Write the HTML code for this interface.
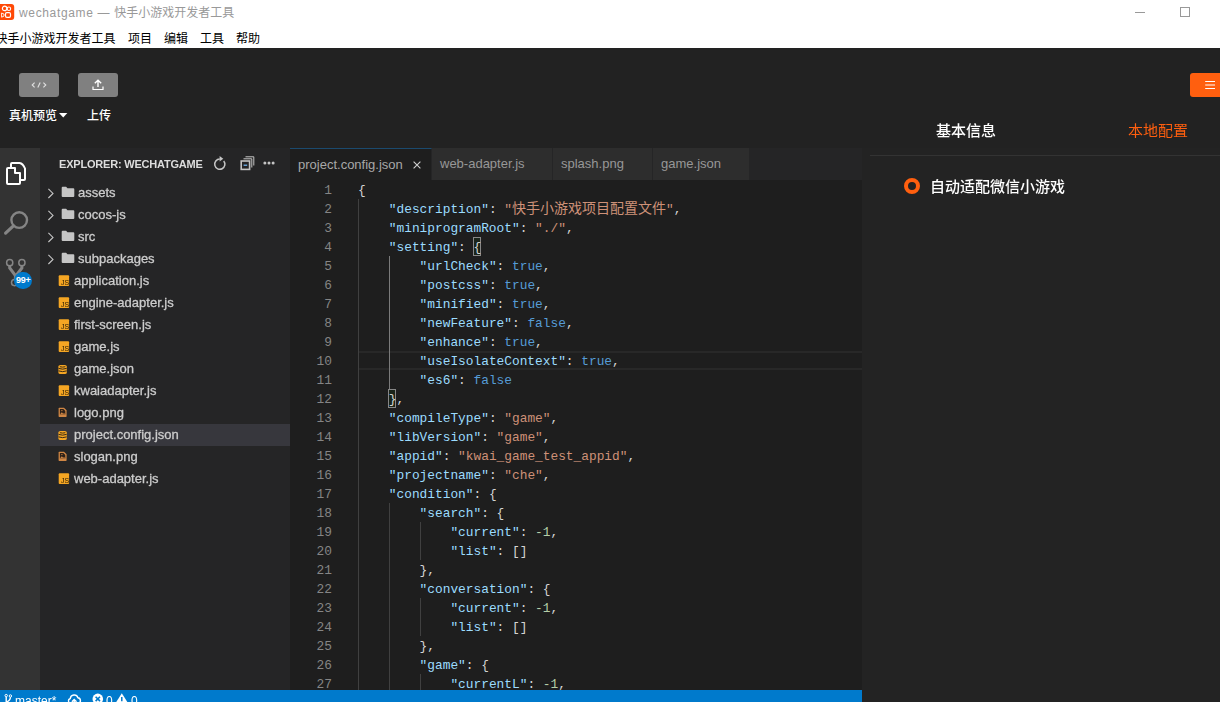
<!DOCTYPE html>
<html lang="zh-CN">
<head>
<meta charset="utf-8">
<title>wechatgame — 快手小游戏开发者工具</title>
<style>
*{box-sizing:border-box;margin:0;padding:0}
html,body{width:1220px;height:702px;overflow:hidden;background:#222222}
body{position:relative;font-family:"Liberation Sans","Noto Sans CJK SC",sans-serif;font-size:13px;color:#ccc}
.abs{position:absolute}
#titlebar{position:absolute;left:0;top:0;width:1220px;height:48px;background:#fff}
#title{position:absolute;left:19px;top:5px;font-size:12px;line-height:16px;color:#999;white-space:nowrap}
#title .lat{letter-spacing:0.65px}
#menu{position:absolute;left:-3px;top:31px;font-size:12px;line-height:16px;color:#000;white-space:nowrap}
#menu span{position:absolute;top:0}
#toolbar{position:absolute;left:0;top:48px;width:1220px;height:100px;background:#222222}
.tbtn{position:absolute;top:25px;width:40px;height:24px;border-radius:3px;background:#808080}
.tlabel{position:absolute;top:60px;font-size:12px;line-height:16px;color:#fff;white-space:nowrap;font-weight:500}
#activity{position:absolute;left:0;top:148px;width:40px;height:542px;background:#333333}
#badge{position:absolute;left:14.4px;top:123.6px;width:17.6px;height:17.6px;border-radius:50%;background:#007acc;color:#fff;font-size:9px;font-weight:bold;line-height:17.6px;text-align:center;letter-spacing:-0.3px}
#sidebar{position:absolute;left:40px;top:148px;width:250px;height:542px;background:#252526}
#sbtitle{position:absolute;left:19px;top:9px;font-size:11px;line-height:14px;color:#ddd;font-weight:bold;white-space:nowrap;letter-spacing:-0.2px}
.row{position:absolute;left:0;width:250px;height:22px;line-height:22px;font-size:13px;color:#cccccc;white-space:nowrap;-webkit-text-stroke:0.3px #cccccc}
.row.sel{background:#37373d}
.row .lbl{position:absolute;top:0}
.row svg{position:absolute}
#tabs{position:absolute;left:290px;top:148px;width:572px;height:32px;background:#252526}
.tab{position:absolute;top:0;height:32px;background:#2d2d2d;color:#979797;font-size:13px;line-height:31px;padding-left:8px;white-space:nowrap;border-right:1px solid #252526}
.tab.active{background:#1e1e1e;color:#a8a8a8;border-top:1px solid #1b4a6e;line-height:32px;padding-left:8px}
#editor{position:absolute;left:290px;top:180px;width:572px;height:510px;background:#1e1e1e;overflow:hidden}
.ln{position:absolute;margin-top:1px;left:0;width:42px;text-align:right;height:19px;line-height:19px;color:#858585;font-family:"Liberation Mono","DejaVu Sans Mono",monospace;font-size:12.83px}
.cl{position:absolute;margin-top:1px;left:68px;height:19px;line-height:19px;white-space:pre;color:#d4d4d4;font-family:"Liberation Mono","Noto Sans CJK SC",monospace;font-size:12.83px}
.k{color:#9cdcfe}.s{color:#ce9178}.b{color:#569cd6}.n{color:#b5cea8}
.cj{line-height:0;font-size:14px;font-family:"Noto Sans CJK SC",sans-serif}
.bm{position:absolute;width:8px;height:19px;border:1px solid #888;background:rgba(0,100,0,0.1)}
.guide{position:absolute;width:1px;background:#404040}
.guide.act{background:#7a7a7a}
.curline{position:absolute;left:68px;width:504px;height:19px;border-top:2px solid #282828;border-bottom:2px solid #282828}
#status{position:absolute;left:0;top:690px;width:862px;height:22px;background:#007acc;color:#fff;font-size:12px;line-height:22px;white-space:nowrap}
#status span{position:absolute;top:0}
#status svg{position:absolute}
#right{position:absolute;left:862px;top:148px;width:358px;height:554px;background:#232323}
.rtab{position:absolute;top:-27px;font-size:15px;line-height:20px;white-space:nowrap}
#sbin{position:absolute;left:0;top:0;width:250px;height:542px;will-change:transform}
.gl{position:absolute;left:0;top:0;will-change:transform}

</style>
</head>
<body>
<div id="titlebar">
  <svg class="abs" style="left:0;top:4px" width="15" height="16" viewBox="0 0 15 16"><path d="M-4 0H11.2A3 3 0 0 1 14.2 3V13A3 3 0 0 1 11.2 16H-4Z" fill="#ff4906"/><circle cx="4.6" cy="4.4" r="2.2" fill="none" stroke="#fff" stroke-width="1.2"/><circle cx="8.9" cy="4.7" r="1.75" fill="none" stroke="#fff" stroke-width="1.1"/><rect x="5.5" y="8.6" width="5" height="4.8" rx="1.4" fill="none" stroke="#fff" stroke-width="1.2"/><path d="M1.6 9L4 10.1V12.1L1.6 13.2Z" fill="none" stroke="#fff" stroke-width="0.9" stroke-linejoin="round"/></svg>
  <div id="title"><span class="lat">wechatgame — </span>快手小游戏开发者工具</div>
  <svg class="abs" style="left:1130px;top:0" width="70" height="24" viewBox="0 0 70 24"><path d="M5 12.5H15" stroke="#999" stroke-width="1"/><rect x="50.5" y="7.5" width="9" height="9" fill="none" stroke="#999" stroke-width="1"/></svg>
  <div id="menu"><span style="left:-1.5px">快手小游戏开发者工具</span><span style="left:131px">项目</span><span style="left:167px">编辑</span><span style="left:203px">工具</span><span style="left:239px">帮助</span></div>
</div>

<div id="toolbar">
  <div class="tbtn" style="left:19px"><svg class="abs" style="left:12px;top:8px" width="16" height="8" viewBox="0 0 16 8"><path d="M3.6 1.6L1.2 4L3.6 6.4M12.4 1.6L14.8 4L12.4 6.4M9.2 1.4L6.8 6.6" fill="none" stroke="#e0e0e0" stroke-width="1.1"/></svg></div>
  <div class="tbtn" style="left:78px"><svg class="abs" style="left:14px;top:6px" width="12" height="12" viewBox="0 0 12 12"><path d="M6 1.2V8M2.8 4.2L6 1.2L9.2 4.2" fill="none" stroke="#fff" stroke-width="1.4"/><path d="M1 7.5V10.5H11V7.5" fill="none" stroke="#fff" stroke-width="1.2"/></svg></div>
  <div class="tlabel" style="left:9px">真机预览</div>
  <svg class="abs" style="left:59px;top:65px" width="9" height="5" viewBox="0 0 9 5"><path d="M0 0H8.4L4.2 4.4Z" fill="#fff"/></svg>
  <div class="tlabel" style="left:87px">上传</div>
  <div class="abs" style="left:1190px;top:25px;width:34px;height:24px;border-radius:3px;background:#ff5f0f"></div>
  <svg class="abs" style="left:1200px;top:28px" width="20" height="18" viewBox="1200 76 20 18"><path d="M1205.2 81.5H1215M1205.2 88.5H1215" stroke="#fff" stroke-width="1.1"/><path d="M1205.2 85H1215" stroke="#ffc3a4" stroke-width="1.6"/></svg>
</div>

<div id="activity">
  <svg class="abs" style="left:0;top:0" width="40" height="50" viewBox="0 148 40 50"><path d="M11 167V164Q11 163 12 163H19.5Q23 163.5 25 168.5V179Q25 180 24 180H21" fill="none" stroke="#fff" stroke-width="2"/><path d="M8 168H15V173H20V183Q20 184 19 184H8Q7 184 7 183V169Q7 168 8 168Z" fill="none" stroke="#fff" stroke-width="2" stroke-linejoin="round"/></svg>
  <svg class="abs" style="left:0;top:50px" width="40" height="100" viewBox="0 198 40 100"><circle cx="19.2" cy="220.1" r="7.8" fill="none" stroke="#858585" stroke-width="2.4"/><path d="M13.4 225.8L5.6 233.1" stroke="#858585" stroke-width="3.2" stroke-linecap="round"/><circle cx="9.7" cy="262.7" r="3.1" fill="none" stroke="#858585" stroke-width="1.5"/><circle cx="21.9" cy="262.7" r="3.1" fill="none" stroke="#858585" stroke-width="1.5"/><circle cx="14.6" cy="282.6" r="3.1" fill="none" stroke="#858585" stroke-width="1.5"/><path d="M9.7 266V268L15.4 275.5V279.5M21.9 266V268L16.2 275.5" fill="none" stroke="#858585" stroke-width="3"/></svg>
  <div id="badge">99+</div>
</div>

<div id="sidebar"><div id="sbin">
  <div id="sbtitle">EXPLORER: WECHATGAME</div>
  <svg class="abs" style="left:173px;top:7px" width="14" height="16" viewBox="0 0 14 16"><path d="M10.7 5.9A5.1 5.1 0 1 1 6.8 4.1" fill="none" stroke="#c5c5c5" stroke-width="1.5"/><path d="M6.6 1L10.3 3.7L6.6 6.4Z" fill="#c5c5c5"/></svg>
  <svg class="abs" style="left:200px;top:8px" width="15" height="15" viewBox="0 0 15 15"><path d="M5.5 0.8H13.8V9.5M3.5 2.8H11.8V11.5" fill="none" stroke="#c5c5c5" stroke-width="1"/><rect x="1.2" y="5" width="8.4" height="8.4" fill="none" stroke="#c5c5c5" stroke-width="1.6"/><rect x="3.6" y="8.6" width="3.6" height="1.2" fill="#75beff"/></svg>
  <svg class="abs" style="left:223px;top:13px" width="12" height="4" viewBox="0 0 12 4"><circle cx="1.9" cy="1.9" r="1.5" fill="#c5c5c5"/><circle cx="6" cy="1.9" r="1.5" fill="#c5c5c5"/><circle cx="10.1" cy="1.9" r="1.5" fill="#c5c5c5"/></svg>
<div class="row" style="top:34px"><svg style="left:0;top:0" width="40" height="22" viewBox="0 0 40 22"><path d="M8.4 6.9L13 11.45L8.4 16" fill="none" stroke="#c5c5c5" stroke-width="1.1"/><g transform="translate(21.1,4.2)"><path d="M1.6 0.6H5L6.4 2H12.2Q13.2 2 13.2 3V9.8Q13.2 10.8 12.2 10.8H1.6Q0.6 10.8 0.6 9.8V1.6Q0.6 0.6 1.6 0.6Z" fill="#c5c5c5"/></g></svg><span class="lbl" style="left:38px">assets</span></div>
<div class="row" style="top:56px"><svg style="left:0;top:0" width="40" height="22" viewBox="0 0 40 22"><path d="M8.4 6.9L13 11.45L8.4 16" fill="none" stroke="#c5c5c5" stroke-width="1.1"/><g transform="translate(21.1,4.2)"><path d="M1.6 0.6H5L6.4 2H12.2Q13.2 2 13.2 3V9.8Q13.2 10.8 12.2 10.8H1.6Q0.6 10.8 0.6 9.8V1.6Q0.6 0.6 1.6 0.6Z" fill="#c5c5c5"/></g></svg><span class="lbl" style="left:38px">cocos-js</span></div>
<div class="row" style="top:78px"><svg style="left:0;top:0" width="40" height="22" viewBox="0 0 40 22"><path d="M8.4 6.9L13 11.45L8.4 16" fill="none" stroke="#c5c5c5" stroke-width="1.1"/><g transform="translate(21.1,4.2)"><path d="M1.6 0.6H5L6.4 2H12.2Q13.2 2 13.2 3V9.8Q13.2 10.8 12.2 10.8H1.6Q0.6 10.8 0.6 9.8V1.6Q0.6 0.6 1.6 0.6Z" fill="#c5c5c5"/></g></svg><span class="lbl" style="left:38px">src</span></div>
<div class="row" style="top:100px"><svg style="left:0;top:0" width="40" height="22" viewBox="0 0 40 22"><path d="M8.4 6.9L13 11.45L8.4 16" fill="none" stroke="#c5c5c5" stroke-width="1.1"/><g transform="translate(21.1,4.2)"><path d="M1.6 0.6H5L6.4 2H12.2Q13.2 2 13.2 3V9.8Q13.2 10.8 12.2 10.8H1.6Q0.6 10.8 0.6 9.8V1.6Q0.6 0.6 1.6 0.6Z" fill="#c5c5c5"/></g></svg><span class="lbl" style="left:38px">subpackages</span></div>
<div class="row" style="top:122px"><svg style="left:0;top:0" width="40" height="22" viewBox="0 0 40 22"><g transform="translate(18.7,5.2)"><rect x="0" y="0" width="10.4" height="10.8" rx="1" fill="#f5a623"/><text x="2.4" y="9.8" font-family="Liberation Sans, sans-serif" font-size="7" fill="#2a1c04">JS</text></g></svg><span class="lbl" style="left:34px">application.js</span></div>
<div class="row" style="top:144px"><svg style="left:0;top:0" width="40" height="22" viewBox="0 0 40 22"><g transform="translate(18.7,5.2)"><rect x="0" y="0" width="10.4" height="10.8" rx="1" fill="#f5a623"/><text x="2.4" y="9.8" font-family="Liberation Sans, sans-serif" font-size="7" fill="#2a1c04">JS</text></g></svg><span class="lbl" style="left:34px">engine-adapter.js</span></div>
<div class="row" style="top:166px"><svg style="left:0;top:0" width="40" height="22" viewBox="0 0 40 22"><g transform="translate(18.7,5.2)"><rect x="0" y="0" width="10.4" height="10.8" rx="1" fill="#f5a623"/><text x="2.4" y="9.8" font-family="Liberation Sans, sans-serif" font-size="7" fill="#2a1c04">JS</text></g></svg><span class="lbl" style="left:34px">first-screen.js</span></div>
<div class="row" style="top:188px"><svg style="left:0;top:0" width="40" height="22" viewBox="0 0 40 22"><g transform="translate(18.7,5.2)"><rect x="0" y="0" width="10.4" height="10.8" rx="1" fill="#f5a623"/><text x="2.4" y="9.8" font-family="Liberation Sans, sans-serif" font-size="7" fill="#2a1c04">JS</text></g></svg><span class="lbl" style="left:34px">game.js</span></div>
<div class="row" style="top:210px"><svg style="left:0;top:0" width="40" height="22" viewBox="0 0 40 22"><g transform="translate(18.4,6.9)"><rect x="0" y="0" width="8.4" height="9.2" rx="2" ry="1.6" fill="#f5a623"/><path d="M1.5 1.8Q4.2 2.6 6.9 1.8" fill="none" stroke="#2e2110" stroke-width="0.9"/><path d="M0.2 3.5Q4.2 5 8.2 3.5M0.2 6Q4.2 7.5 8.2 6" fill="none" stroke="#2b2014" stroke-width="0.95"/></g></svg><span class="lbl" style="left:34px">game.json</span></div>
<div class="row" style="top:232px"><svg style="left:0;top:0" width="40" height="22" viewBox="0 0 40 22"><g transform="translate(18.7,5.2)"><rect x="0" y="0" width="10.4" height="10.8" rx="1" fill="#f5a623"/><text x="2.4" y="9.8" font-family="Liberation Sans, sans-serif" font-size="7" fill="#2a1c04">JS</text></g></svg><span class="lbl" style="left:34px">kwaiadapter.js</span></div>
<div class="row" style="top:254px"><svg style="left:0;top:0" width="40" height="22" viewBox="0 0 40 22"><g transform="translate(18.6,5.7)"><path d="M0.8 0H5.4L8 2.6V8.6Q8 9.2 7.4 9.2H0.6Q0 9.2 0 8.6V0.8Q0 0 0.8 0Z" fill="#cf8644"/><path d="M1.3 1.4H4.8L6.7 3.3V6.8H1.3Z" fill="#2e2118"/><path d="M1.3 6.9L3.2 4.5L4.6 6.1L5.5 5.3L6.7 6.9Z" fill="#cf8644"/><circle cx="3.3" cy="2.9" r="0.7" fill="#cf8644"/></g></svg><span class="lbl" style="left:34px">logo.png</span></div>
<div class="row sel" style="top:276px"><svg style="left:0;top:0" width="40" height="22" viewBox="0 0 40 22"><g transform="translate(18.4,6.9)"><rect x="0" y="0" width="8.4" height="9.2" rx="2" ry="1.6" fill="#f5a623"/><path d="M1.5 1.8Q4.2 2.6 6.9 1.8" fill="none" stroke="#2e2110" stroke-width="0.9"/><path d="M0.2 3.5Q4.2 5 8.2 3.5M0.2 6Q4.2 7.5 8.2 6" fill="none" stroke="#2b2014" stroke-width="0.95"/></g></svg><span class="lbl" style="left:34px">project.config.json</span></div>
<div class="row" style="top:298px"><svg style="left:0;top:0" width="40" height="22" viewBox="0 0 40 22"><g transform="translate(18.6,5.7)"><path d="M0.8 0H5.4L8 2.6V8.6Q8 9.2 7.4 9.2H0.6Q0 9.2 0 8.6V0.8Q0 0 0.8 0Z" fill="#cf8644"/><path d="M1.3 1.4H4.8L6.7 3.3V6.8H1.3Z" fill="#2e2118"/><path d="M1.3 6.9L3.2 4.5L4.6 6.1L5.5 5.3L6.7 6.9Z" fill="#cf8644"/><circle cx="3.3" cy="2.9" r="0.7" fill="#cf8644"/></g></svg><span class="lbl" style="left:34px">slogan.png</span></div>
<div class="row" style="top:320px"><svg style="left:0;top:0" width="40" height="22" viewBox="0 0 40 22"><g transform="translate(18.7,5.2)"><rect x="0" y="0" width="10.4" height="10.8" rx="1" fill="#f5a623"/><text x="2.4" y="9.8" font-family="Liberation Sans, sans-serif" font-size="7" fill="#2a1c04">JS</text></g></svg><span class="lbl" style="left:34px">web-adapter.js</span></div>
</div></div>

<div id="tabs">
  <div class="tab active" style="left:0;width:142px">project.config.json<svg class="abs" style="left:122.5px;top:12.2px" width="8" height="8" viewBox="0 0 8 8"><path d="M0.6 0.6L7.4 7.4M7.4 0.6L0.6 7.4" stroke="#d0d0d0" stroke-width="1.1"/></svg></div>
  <div class="tab" style="left:142px;width:121px">web-adapter.js</div>
  <div class="tab" style="left:263px;width:100px">splash.png</div>
  <div class="tab" style="left:363px;width:97px">game.json</div>
</div>
<div id="editor">
<div class="curline" style="top:171px"></div>
<div class="bm" style="left:183.0px;top:57px"></div>
<div class="bm" style="left:98.3px;top:209px"></div>
<div class="guide" style="left:68.0px;top:19px;height:494px"></div>
<div class="guide act" style="left:98.8px;top:76px;height:133px"></div>
<div class="guide" style="left:98.8px;top:323px;height:190px"></div>
<div class="guide" style="left:129.6px;top:342px;height:38px"></div>
<div class="guide" style="left:129.6px;top:418px;height:38px"></div>
<div class="guide" style="left:129.6px;top:494px;height:19px"></div>
<div class="ln" style="top:0px">1</div>
<div class="cl" style="top:0px">{</div>
<div class="ln" style="top:19px">2</div>
<div class="cl" style="top:19px">    <span class="k">"description"</span>: <span class="s">"<span class="cj">快手小游戏项目配置文件</span>"</span>,</div>
<div class="ln" style="top:38px">3</div>
<div class="cl" style="top:38px">    <span class="k">"miniprogramRoot"</span>: <span class="s">"./"</span>,</div>
<div class="ln" style="top:57px">4</div>
<div class="cl" style="top:57px">    <span class="k">"setting"</span>: {</div>
<div class="ln" style="top:76px">5</div>
<div class="cl" style="top:76px">        <span class="k">"urlCheck"</span>: <span class="b">true</span>,</div>
<div class="ln" style="top:95px">6</div>
<div class="cl" style="top:95px">        <span class="k">"postcss"</span>: <span class="b">true</span>,</div>
<div class="ln" style="top:114px">7</div>
<div class="cl" style="top:114px">        <span class="k">"minified"</span>: <span class="b">true</span>,</div>
<div class="ln" style="top:133px">8</div>
<div class="cl" style="top:133px">        <span class="k">"newFeature"</span>: <span class="b">false</span>,</div>
<div class="ln" style="top:152px">9</div>
<div class="cl" style="top:152px">        <span class="k">"enhance"</span>: <span class="b">true</span>,</div>
<div class="ln" style="top:171px">10</div>
<div class="cl" style="top:171px">        <span class="k">"useIsolateContext"</span>: <span class="b">true</span>,</div>
<div class="ln" style="top:190px">11</div>
<div class="cl" style="top:190px">        <span class="k">"es6"</span>: <span class="b">false</span></div>
<div class="ln" style="top:209px">12</div>
<div class="cl" style="top:209px">    },</div>
<div class="ln" style="top:228px">13</div>
<div class="cl" style="top:228px">    <span class="k">"compileType"</span>: <span class="s">"game"</span>,</div>
<div class="ln" style="top:247px">14</div>
<div class="cl" style="top:247px">    <span class="k">"libVersion"</span>: <span class="s">"game"</span>,</div>
<div class="ln" style="top:266px">15</div>
<div class="cl" style="top:266px">    <span class="k">"appid"</span>: <span class="s">"kwai_game_test_appid"</span>,</div>
<div class="ln" style="top:285px">16</div>
<div class="cl" style="top:285px">    <span class="k">"projectname"</span>: <span class="s">"che"</span>,</div>
<div class="ln" style="top:304px">17</div>
<div class="cl" style="top:304px">    <span class="k">"condition"</span>: {</div>
<div class="ln" style="top:323px">18</div>
<div class="cl" style="top:323px">        <span class="k">"search"</span>: {</div>
<div class="ln" style="top:342px">19</div>
<div class="cl" style="top:342px">            <span class="k">"current"</span>: <span class="n">-1</span>,</div>
<div class="ln" style="top:361px">20</div>
<div class="cl" style="top:361px">            <span class="k">"list"</span>: []</div>
<div class="ln" style="top:380px">21</div>
<div class="cl" style="top:380px">        },</div>
<div class="ln" style="top:399px">22</div>
<div class="cl" style="top:399px">        <span class="k">"conversation"</span>: {</div>
<div class="ln" style="top:418px">23</div>
<div class="cl" style="top:418px">            <span class="k">"current"</span>: <span class="n">-1</span>,</div>
<div class="ln" style="top:437px">24</div>
<div class="cl" style="top:437px">            <span class="k">"list"</span>: []</div>
<div class="ln" style="top:456px">25</div>
<div class="cl" style="top:456px">        },</div>
<div class="ln" style="top:475px">26</div>
<div class="cl" style="top:475px">        <span class="k">"game"</span>: {</div>
<div class="ln" style="top:494px">27</div>
<div class="cl" style="top:494px">            <span class="k">"currentL"</span>: <span class="n">-1</span>,</div>
</div>

<div id="status"><div class="gl" style="width:862px;height:22px">
  <svg style="left:0;top:0" width="160" height="22" viewBox="0 690 160 22"><circle cx="6.2" cy="695.6" r="1.2" fill="none" stroke="#fff" stroke-width="1"/><circle cx="10.4" cy="696" r="1.2" fill="none" stroke="#fff" stroke-width="1"/><circle cx="6.2" cy="706" r="1.2" fill="none" stroke="#fff" stroke-width="1"/><path d="M6.2 696.8V704.8M10.4 697.2Q10.4 700.5 6.2 702" fill="none" stroke="#fff" stroke-width="1.4"/><path d="M71.5 703.4H70.6A2.5 2.5 0 0 1 70.3 698.5A3.9 3.9 0 0 1 77.9 697.7A2.9 2.9 0 0 1 78.2 703.4H77" fill="none" stroke="#fff" stroke-width="1.4"/><path d="M74.2 706V699.6M71.9 701.8L74.2 699.4L76.5 701.8" fill="none" stroke="#fff" stroke-width="1.4"/><circle cx="97.8" cy="698.9" r="5.3" fill="#fff"/><path d="M95.6 696.7L100 701.1M100 696.7L95.6 701.1" stroke="#007acc" stroke-width="1.6"/><path d="M121.8 693.2L128.6 704H115Z" fill="#fff"/><path d="M121.8 697V701.2M121.8 702.2V703.6" stroke="#007acc" stroke-width="1.5"/></svg>
  <span style="left:15px">master*</span>
  <span style="left:106px">0</span>
  <span style="left:131px">0</span>
</div></div>

<div id="right"><div class="gl" style="width:358px;height:554px">
  <div class="rtab" style="left:74px;color:#fff;font-weight:500">基本信息</div>
  <div class="rtab" style="left:266px;color:#ff5f0f">本地配置</div>
  <div class="abs" style="left:8px;top:7px;width:350px;height:1px;background:#333"></div>
  <div class="abs" style="left:42px;top:30px;width:16px;height:16px;border-radius:50%;border:4px solid #ff5f0f;background:#222"></div>
  <div class="abs" style="left:68px;top:29px;font-size:15px;line-height:20px;color:#fff;font-weight:500;white-space:nowrap">自动适配微信小游戏</div>
</div></div>
</body>
</html>
